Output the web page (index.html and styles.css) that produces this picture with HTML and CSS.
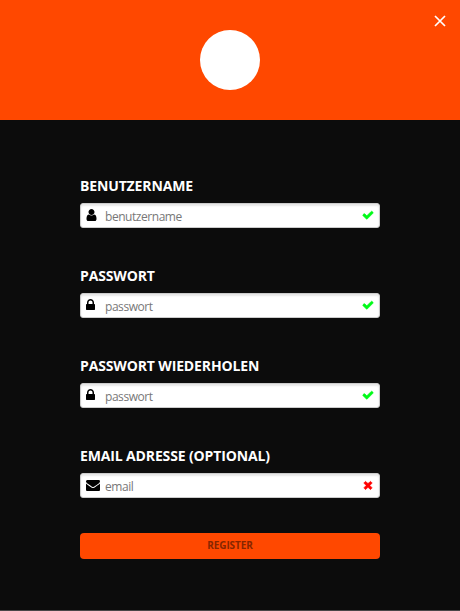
FILE: index.html
```
<!DOCTYPE html>
<html lang="de">
<head>
<meta charset="utf-8">
<title>Register</title>
<link rel="stylesheet" href="styles.css">
</head>
<body>
<svg class="sprite" aria-hidden="true">
  <symbol id="user" viewBox="256 0 1280 1792"><path d="M1536 1399q0 109-62.5 187t-150.5 78h-854q-88 0-150.5-78t-62.5-187q0-85 8.5-160.5t31.5-152 58.5-131 94-89 134.5-34.5q131 128 313 128t313-128q76 0 134.5 34.5t94 89 58.5 131 31.5 152 8.5 160.5zm-256-887q0 159-112.5 271.5t-271.5 112.5-271.5-112.5-112.5-271.5 112.5-271.5 271.5-112.5 271.5 112.5 112.5 271.5z"/></symbol>
  <symbol id="lock" viewBox="320 0 1152 1792"><path d="M640 768h512v-192q0-106-75-181t-181-75-181 75-75 181v192zm832 96v576q0 40-28 68t-68 28h-960q-40 0-68-28t-28-68v-576q0-40 28-68t68-28h32v-192q0-184 132-316t316-132 316 132 132 316v192h32q40 0 68 28t28 68z"/></symbol>
  <symbol id="mail" viewBox="0 0 1792 1792"><path d="M1792 710v794q0 66-47 113t-113 47h-1472q-66 0-113-47t-47-113v-794q44 49 101 87 362 246 497 345 57 42 92.5 65.5t94.5 48 110 24.5h2q51 0 110-24.5t94.5-48 92.5-65.5q170-123 498-345 57-39 100-87zm0-294q0 79-49 151t-122 123q-376 261-468 325-10 7-42.5 31t-54 38.5-52 32.5-57.5 27-50 9h-2q-23 0-50-9t-57.5-27-52-32.5-54-38.5-42.5-31q-91-64-262-182.5t-205-142.5q-62-42-117-115.5t-55-136.5q0-78 41.5-130t118.5-52h1472q65 0 112.5 47t47.5 113z"/></symbol>
  <symbol id="check" viewBox="0 0 1792 1792"><path d="M1671 566q0 40-28 68l-724 724-136 136q-28 28-68 28t-68-28l-136-136-362-362q-28-28-28-68t28-68l136-136q28-28 68-28t68 28l294 295 656-657q28-28 68-28t68 28l136 136q28 28 28 68z"/></symbol>
  <symbol id="cross" viewBox="0 0 1792 1792"><path d="M1490 1322q0 40-28 68l-136 136q-28 28-68 28t-68-28l-294-294-294 294q-28 28-68 28t-68-28l-136-136q-28-28-28-68t28-68l294-294-294-294q-28-28-28-68t28-68l136-136q28-28 68-28t68 28l294 294 294-294q28-28 68-28t68 28l136 136q28 28 28 68t-28 68l-294 294 294 294q28 28 28 68z"/></symbol>
</svg>
<main class="dialog">
  <header class="header">
    <div class="avatar"></div>
    <svg class="close" viewBox="0 0 12 12"><path d="M1 1l10 10M11 1L1 11"/></svg>
  </header>
  <form class="form">
    <div class="field">
      <label class="label" for="name">BENUTZERNAME</label>
      <div class="control">
        <svg class="icon icon-user"><use href="#user"/></svg>
        <input class="input" id="name" type="text" placeholder="benutzername">
        <svg class="status valid"><use href="#check"/></svg>
      </div>
    </div>
    <div class="field">
      <label class="label" for="pass">PASSWORT</label>
      <div class="control">
        <svg class="icon icon-lock"><use href="#lock"/></svg>
        <input class="input" id="pass" type="text" placeholder="passwort">
        <svg class="status valid"><use href="#check"/></svg>
      </div>
    </div>
    <div class="field">
      <label class="label" for="repeat">PASSWORT WIEDERHOLEN</label>
      <div class="control">
        <svg class="icon icon-lock"><use href="#lock"/></svg>
        <input class="input" id="repeat" type="text" placeholder="passwort">
        <svg class="status valid"><use href="#check"/></svg>
      </div>
    </div>
    <div class="field">
      <label class="label" for="email">EMAIL ADRESSE (OPTIONAL)</label>
      <div class="control">
        <svg class="icon icon-mail"><use href="#mail"/></svg>
        <input class="input" id="email" type="text" placeholder="email">
        <svg class="status invalid"><use href="#cross"/></svg>
      </div>
    </div>
    <button class="submit" type="button">REGISTER</button>
  </form>
</main>
</body>
</html>
```
FILE: styles.css
```
* { box-sizing: border-box; }
body {
  margin: 0;
  background: #0c0c0c;
  font-family: "Open Sans", "Noto Sans", sans-serif;
}
.sprite { display: none; }
.dialog {
  height: 611px;
  border-bottom: 1px solid #4a4648;
}
.header {
  position: relative;
  display: flex;
  align-items: center;
  justify-content: center;
  height: 120px;
  background: #ff4800;
}
.avatar {
  width: 60px;
  height: 60px;
  border-radius: 50%;
  background: #fff;
}
.close {
  position: absolute;
  top: 15px;
  right: 14px;
  width: 12px;
  height: 12px;
  fill: none;
  stroke: #fff;
  stroke-width: 1.7;
}
.form {
  width: 300px;
  margin: 0 auto;
  padding-top: 56px;
}
.field { height: 90px; }
.label {
  display: block;
  height: 27px;
  line-height: 20px;
  color: #fff;
  font-size: 14px;
  font-weight: 700;
  letter-spacing: -0.14px;
  white-space: nowrap;
}
.control {
  display: flex;
  height: 25px;
  padding: 0 5px;
  border: 1px solid #ccc;
  border-radius: 3px;
  background: #fff;
  box-shadow: inset 0 2px 2px rgba(0, 0, 0, .1);
}
.icon {
  flex: none;
  height: 14px;
  margin-top: 4px;
}
.icon-user { width: 11px; margin-right: 8px; }
.icon-lock { width: 9px; margin-right: 10px; }
.icon-mail { width: 14px; margin-right: 5px; }
.input {
  flex: 1;
  min-width: 0;
  height: 23px;
  padding: 1px 0 0;
  border: 0;
  outline: 0;
  background: transparent;
  color: #333;
  font: 12px "Open Sans", "Noto Sans", sans-serif;
  letter-spacing: -0.45px;
}
.input::placeholder { color: #777; opacity: 1; }
.status {
  flex: none;
  width: 12px;
  height: 12px;
  margin-top: 5px;
  stroke-width: 90;
}
.valid { fill: #00fa18; stroke: #00fa18; }
.invalid { fill: #f00; stroke: #f00; }
.submit {
  display: block;
  width: 300px;
  height: 26px;
  margin: -3px 0 0;
  padding: 0 0 2px;
  border: 0;
  border-radius: 4px;
  background: #ff4800;
  color: #862600;
  font: 700 10px "Open Sans", "Noto Sans", sans-serif;
  letter-spacing: -0.1px;
}
```
